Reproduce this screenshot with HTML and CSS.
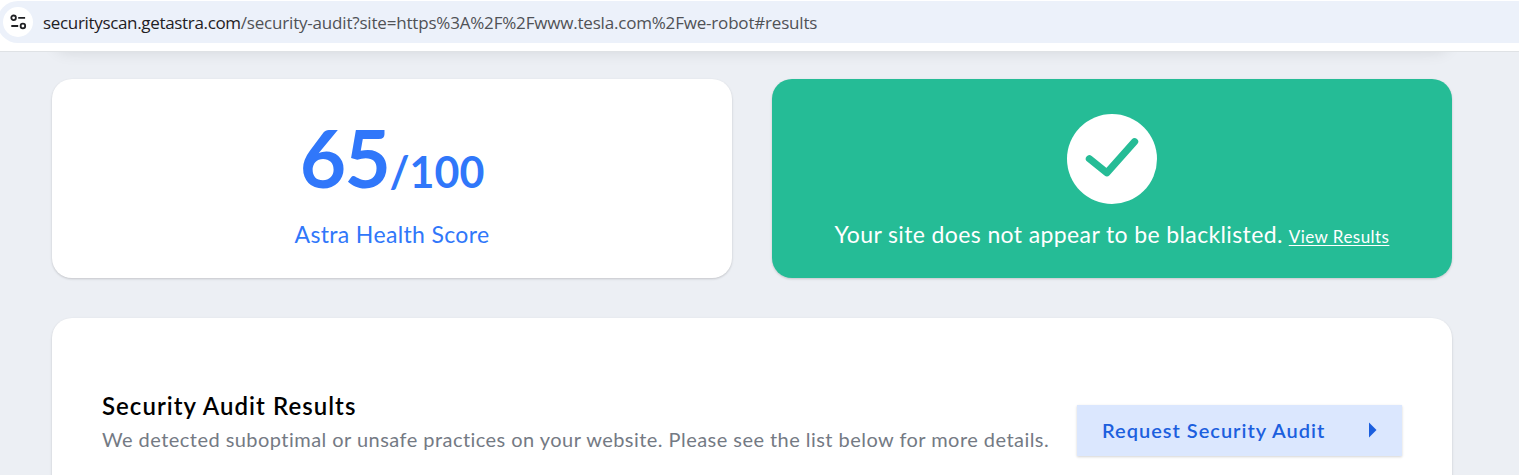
FILE: index.html
```html
<!DOCTYPE html>
<html lang="en">
<head>
<meta charset="utf-8">
<title>Security Audit</title>
<link rel="stylesheet" href="styles.css">
</head>
<body>
<header class="toolbar">
  <div class="omnibox">
    <span class="site-info">
      <svg width="18" height="18" viewBox="0 0 18 18" fill="none" stroke="#1f2023" stroke-width="1.8">
        <circle cx="4.6" cy="4.8" r="2.3"/><path d="M9.2 4.8h6.9M2.3 13h6.9"/><circle cx="13.9" cy="13" r="2.3"/>
      </svg>
    </span>
    <span class="url"><span class="domain">securityscan.getastra.com</span><span class="path">/security-audit?site=https%3A%2F%2Fwww.tesla.com%2Fwe-robot#results</span></span>
  </div>
</header>
<main class="page">
  <div class="previous-card"></div>
  <div class="summary">
    <section class="card score-card">
      <div class="score"><span class="score-value">65</span><span class="score-total">/100</span></div>
      <div class="score-label">Astra Health Score</div>
    </section>
    <section class="card status-card">
      <svg class="check" width="90" height="90" viewBox="0 0 90 90" fill="none">
        <circle cx="45" cy="45" r="45" fill="#fff"/>
        <path d="M22.4 44.8 39.8 58.8 67.6 27.7" stroke="#25bc96" stroke-width="7.2" stroke-linecap="round" stroke-linejoin="round"/>
      </svg>
      <div class="status-line"><span class="status-text">Your site does not appear to be blacklisted.</span><a class="status-link">View Results</a></div>
    </section>
  </div>
  <section class="card results-card">
    <div class="results-copy">
      <h2 class="results-title">Security Audit Results</h2>
      <p class="results-text">We detected suboptimal or unsafe practices on your website. Please see the list below for more details.</p>
    </div>
    <a class="audit-button"><span class="audit-label">Request Security Audit</span>
      <svg width="8" height="16" viewBox="0 0 8 16"><path d="M0 .5v15L7.5 8z" fill="#1c5fde"/></svg>
    </a>
  </section>
</main>
</body>
</html>
```
FILE: styles.css
```css
* { box-sizing: border-box; }
body {
  margin: 0;
  height: 475px;
  overflow: hidden;
  display: flex;
  flex-direction: column;
  background: #eceff4;
  font-family: Lato, "Liberation Sans", sans-serif;
  white-space: nowrap;
}
.toolbar {
  flex: none;
  height: 52px;
  padding-top: 1px;
  background: #fff;
  border-bottom: 1px solid #dfe2e5;
}
.omnibox {
  display: flex;
  align-items: center;
  height: 42px;
  margin-left: -3px;
  padding-left: 6px;
  border-radius: 21px 0 0 21px;
  background: #ecf1fa;
}
.site-info {
  display: flex;
  align-items: center;
  justify-content: center;
  width: 30px;
  height: 30px;
  border-radius: 50%;
  background: #fff;
}
.url {
  margin-left: 10px;
  padding-top: 2px;
  font: 17px/24px "Open Sans", "Noto Sans", sans-serif;
}
.domain { color: #1f2023; letter-spacing: -0.33px; }
.path { color: #505256; letter-spacing: -0.19px; }
.page {
  flex: 1;
  min-height: 0;
  overflow: hidden;
  padding: 0 67px 0 52px;
}
.previous-card {
  height: 30px;
  margin-top: -40px;
  border-radius: 20px;
  box-shadow: 0 13px 15px -3px rgba(0, 0, 0, .1), 0 6px 8px -2px rgba(0, 0, 0, .05);
}
.card {
  border-radius: 20px;
  background: #fff;
  box-shadow: 0 1px 3px rgba(0, 0, 0, .1), 0 1px 2px rgba(0, 0, 0, .08);
}
.summary {
  display: grid;
  grid-template-columns: 1fr 1fr;
  gap: 40px;
  margin-top: 37px;
}
.score-card, .status-card {
  display: flex;
  flex-direction: column;
  align-items: center;
  height: 199px;
}
.score-card { padding-top: 33px; color: #3077fa; }
.score {
  display: flex;
  align-items: baseline;
  height: 90px;
  line-height: 90px;
  font-weight: 700;
}
.score-value { font-size: 80px; letter-spacing: -1.5px; }
.score-total { font-size: 43px; }
.score-label { margin-top: 16px; font-size: 23px; line-height: 32px; letter-spacing: .35px; }
.status-card { padding-top: 35px; background: #25bc96; color: #fff; }
.check { flex: none; }
.status-line { margin-top: 14px; line-height: 32px; }
.status-text { font-size: 23px; letter-spacing: .38px; }
.status-link { margin-left: 6px; font-size: 17px; letter-spacing: .45px; text-decoration: underline; text-underline-offset: 2px; }
.results-card {
  display: flex;
  justify-content: space-between;
  height: 260px;
  margin-top: 40px;
  padding: 71px 50px 0 50px;
}
.results-title {
  margin: 0;
  color: #000;
  font-size: 24px;
  font-weight: 600;
  line-height: 34px;
  letter-spacing: 1.04px;
}
.results-text { margin: 2px 0 0; color: #747a84; font-size: 20px; line-height: 28px; letter-spacing: .455px; }
.audit-button {
  display: flex;
  align-items: center;
  justify-content: space-between;
  width: 325px;
  height: 51px;
  margin-top: 16px;
  padding: 0 25px 2px 25px;
  background: #dbe7fe;
  color: #1c5fde;
  font-size: 20px;
  font-weight: 600;
  box-shadow: 0 1px 3px rgba(0, 0, 0, .1), 0 1px 2px rgba(0, 0, 0, .08);
}
.audit-label { letter-spacing: 1px; }
```
